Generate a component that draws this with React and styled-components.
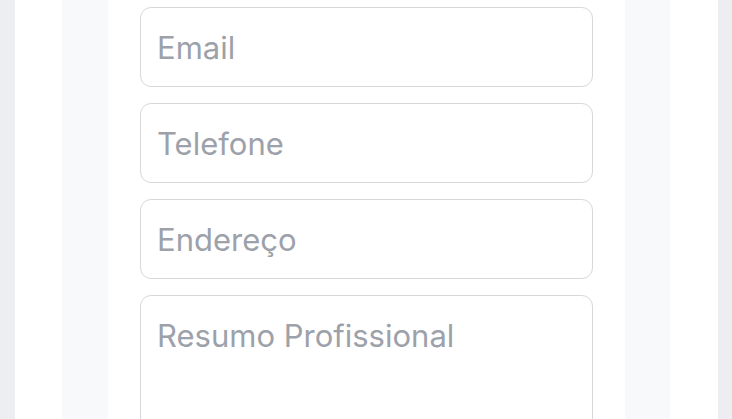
import React from "react";
import styled, { createGlobalStyle } from "styled-components";

const GlobalStyle = createGlobalStyle`
  html, body {
    margin: 0;
    padding: 0;
    background: #eceef1;
    font-family: Inter, "Noto Sans", sans-serif;
  }
  body {
    overflow: hidden;
  }
`;

const Screen = styled.div`
  height: 419px;
  padding: 0 14px 0 15px;
  box-sizing: border-box;
  overflow: hidden;
`;

const Page = styled.div`
  background: #ffffff;
  height: 100%;
  padding: 0 48px 0 47px;
  box-sizing: border-box;
`;

const Panel = styled.div`
  background: #f8f9fb;
  height: 100%;
  padding: 0 45px 0 46px;
  box-sizing: border-box;
`;

const Card = styled.div`
  background: #ffffff;
  height: 100%;
  padding: 7px 32px 0 32px;
  box-sizing: border-box;
  display: flex;
  flex-direction: column;
  gap: 16px;
  overflow: hidden;
`;

const Field = styled.input`
  flex-shrink: 0;
  height: 80px;
  box-sizing: border-box;
  border: 1.5px solid #d6d8dc;
  border-radius: 11px;
  padding: 0 16px;
  font-family: Inter, "Noto Sans", sans-serif;
  font-size: 31px;
  color: #374151;
  background: #ffffff;
  outline: none;

  &::placeholder {
    color: #9ca1aa;
  }
`;

const TextArea = styled.textarea`
  flex-shrink: 0;
  height: 170px;
  box-sizing: border-box;
  border: 1.5px solid #d6d8dc;
  border-radius: 11px;
  padding: 21px 16px;
  font-family: Inter, "Noto Sans", sans-serif;
  font-size: 31px;
  color: #374151;
  background: #ffffff;
  outline: none;
  resize: none;

  &::placeholder {
    color: #9ca1aa;
  }
`;

export default function App() {
  return (
    <>
      <GlobalStyle />
      <Screen>
        <Page>
          <Panel>
            <Card>
              <Field type="email" placeholder="Email" />
              <Field type="tel" placeholder="Telefone" />
              <Field type="text" placeholder="Endereço" />
              <TextArea placeholder="Resumo Profissional" />
            </Card>
          </Panel>
        </Page>
      </Screen>
    </>
  );
}
